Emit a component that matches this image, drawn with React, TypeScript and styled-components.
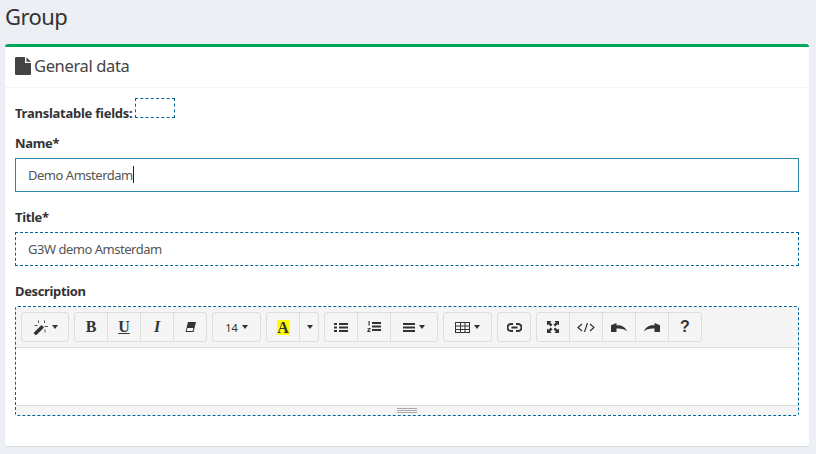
import React from 'react';
import styled, { createGlobalStyle } from 'styled-components';

const GlobalStyle = createGlobalStyle`
  html, body { margin: 0; padding: 0; background: #ecf0f5; }
  body { font-family: "Noto Sans", Lato, sans-serif; font-size: 13px; color: #333; overflow: hidden; }
`;

const Page = styled.div`
  width: 816px;
  height: 454px;
  box-sizing: border-box;
  padding: 0 7px 8px 5px;
  display: flex;
  flex-direction: column;
`;

const PageTitle = styled.h1`
  margin: 0;
  height: 44px;
  padding-top: 2px;
  box-sizing: border-box;
  font-size: 22px;
  line-height: 28px;
  font-weight: 400;
  letter-spacing: -0.6px;
  color: #333;
`;

const Box = styled.section`
  flex: 1;
  background: #fff;
  border-top: 3px solid #00a65a;
  border-radius: 3px;
  box-shadow: 0 1px 1px rgba(0, 0, 0, 0.1);
`;

const BoxHeader = styled.header`
  height: 41px;
  box-sizing: border-box;
  border-bottom: 1px solid #f4f4f4;
  padding: 0 0 3px 10px;
  display: flex;
  align-items: center;
  gap: 3px;
  font-size: 16.5px;
  letter-spacing: -0.35px;
  color: #444;
`;

const BoxBody = styled.div`
  padding: 10px;
`;

const Translatable = styled.div`
  display: flex;
  align-items: flex-start;
  height: 20px;
  font-weight: 700;
  line-height: 30px;
`;

const FieldsText = styled.span`
  width: 118px;
  letter-spacing: -0.25px;
  white-space: nowrap;
`;

const DashedTag = styled.span`
  display: block;
  width: 40px;
  height: 20px;
  box-sizing: border-box;
  border: 1px dashed #006699;
  margin-left: 2px;
`;

const Field = styled.div`
  margin-top: 15px;
`;

const Label = styled.label`
  display: block;
  height: 20px;
  line-height: 20px;
  font-weight: 700;
  letter-spacing: -0.35px;
  margin-bottom: 5px;
`;

const TextBox = styled.div<{ $focus?: boolean }>`
  height: 34px;
  box-sizing: border-box;
  border: 1px ${(p) => (p.$focus ? 'solid #2b86ad' : 'dashed #006699')};
  padding: 0 0 1px 12px;
  display: flex;
  align-items: center;
  letter-spacing: -0.48px;
  color: #555;
`;

const Caret = styled.span`
  display: inline-block;
  width: 1px;
  height: 17px;
  background: #222;
`;

const Editor = styled.div`
  height: 110px;
  box-sizing: border-box;
  border: 1px dashed #006699;
  border-radius: 3px;
  display: flex;
  flex-direction: column;
`;

const Toolbar = styled.div`
  height: 41px;
  box-sizing: border-box;
  background: #f5f5f5;
  border-bottom: 1px solid #dddddd;
  padding: 5px 0 0 5px;
  display: flex;
  gap: 5px;
`;

const BtnGroup = styled.div`
  display: flex;
  height: 30px;
`;

const Btn = styled.div<{ $w?: number }>`
  width: ${(p) => p.$w ?? 34}px;
  box-sizing: border-box;
  border: 1px solid #dddddd;
  display: flex;
  align-items: center;
  justify-content: center;
  gap: 2px;
  font-size: 11px;
  color: #333;
  & + & { margin-left: -1px; }
  &:first-child { border-radius: 3px 0 0 3px; }
  &:last-child { border-radius: 0 3px 3px 0; }
  &:only-child { border-radius: 3px; }
`;

const Arrow = styled.span`
  width: 0;
  height: 0;
  margin-left: 2px;
  border-left: 3px solid transparent;
  border-right: 3px solid transparent;
  border-top: 4px solid #333;
`;

const SerifGlyph = styled.span<{ $italic?: boolean; $under?: boolean }>`
  font-family: "Liberation Serif", serif;
  font-weight: 700;
  font-size: 16px;
  line-height: 16px;
  font-style: ${(p) => (p.$italic ? 'italic' : 'normal')};
  text-decoration: ${(p) => (p.$under ? 'underline' : 'none')};
  color: #333;
`;

const Highlight = styled.span`
  display: flex;
  align-items: center;
  justify-content: center;
  width: 13px;
  height: 15px;
  background: #ffff00;
  font-family: "Liberation Serif", serif;
  font-weight: 700;
  font-size: 16px;
  line-height: 15px;
`;

const Help = styled.span`
  font-family: "Liberation Sans", sans-serif;
  font-weight: 700;
  font-size: 16px;
  line-height: 16px;
`;

const EditArea = styled.div`
  flex: 1;
  background: #fff;
`;

const StatusBar = styled.div`
  height: 10px;
  box-sizing: border-box;
  background: #f5f5f5;
  border-top: 1px solid #dddddd;
  display: flex;
  align-items: center;
  justify-content: center;
`;

const Grip = styled.span`
  width: 20px;
  height: 5px;
  box-sizing: border-box;
  border-top: 1px solid #a9a9a9;
  border-bottom: 1px solid #a9a9a9;
  &::after {
    content: '';
    display: block;
    height: 1px;
    margin-top: 1px;
    background: #a9a9a9;
  }
`;

const Ico: React.FC<{ w: number; h: number; children: React.ReactNode }> = ({ w, h, children }) => (
  <svg width={w} height={h} viewBox={`0 0 ${w} ${h}`} fill="#333" stroke="none">
    {children}
  </svg>
);

const FileIcon = () => (
  <svg width="16" height="18" viewBox="0 0 16 18" fill="#444">
    <path d="M1 0h9v6h6v11a1 1 0 0 1-1 1H1a1 1 0 0 1-1-1V1a1 1 0 0 1 1-1z" />
    <path d="M11.5 0.3L16 4.8h-4.5z" />
  </svg>
);

const MagicIcon = () => (
  <Ico w={15} h={15}>
    <path d="M8.5 5l2.5 2.5L3 15.5 0.5 13z" />
    <path d="M5 0.5h1v2.5H5zM11 0.5h1v2.5h-1zM11.5 6h3.5v1h-3.5zM1.5 5h3v1h-3zM11.5 9.5h1v3h-1z" fill="#555" />
  </Ico>
);

const EraserIcon = () => (
  <Ico w={11} h={10}>
    <path fillRule="evenodd" d="M3 0h8L8.5 10H0.5zM2.4 6L1.7 9h6L8.4 6z" />
  </Ico>
);

const ListUlIcon = () => (
  <Ico w={14} h={9}>
    <path d="M0 0h3v2H0zM0 3.5h3v2H0zM0 7h3v2H0zM5 0h9v2H5zM5 3.5h9v2H5zM5 7h9v2H5z" />
  </Ico>
);

const ListOlIcon = () => (
  <Ico w={14} h={12}>
    <path d="M1.5 0h1.2v4.5H1.5zM0.5 7h3v1l-1.7 2h1.8v1H0.3v-1l1.9-2.2H0.5zM5 1h9v2H5zM5 4.5h9v2H5zM5 8h9v2H5z" />
  </Ico>
);

const AlignIcon = () => (
  <Ico w={12} h={9}>
    <path d="M0 0h12v2H0zM0 3.5h12v2H0zM0 7h12v2H0z" />
  </Ico>
);

const TableIcon = () => (
  <svg width="15" height="11" viewBox="0 0 15 11" fill="none" stroke="#333" strokeWidth="1">
    <rect x="0.5" y="0.5" width="14" height="10" />
    <path d="M5.5 0v11M10 0v11M0 4h15M0 7.5h15" />
  </svg>
);

const LinkIcon = () => (
  <svg width="15" height="9" viewBox="0 0 15 9" fill="none" stroke="#333" strokeWidth="2">
    <path d="M6 1H4a3.5 3.5 0 0 0 0 7h2M9 1h2a3.5 3.5 0 0 1 0 7H9M4.5 4.5h6" />
  </svg>
);

const ExpandIcon = () => (
  <Ico w={12} h={12}>
    <path d="M0 0h4.5L3.2 1.4 5.5 3.8 3.8 5.5 1.4 3.2 0 4.5zM12 0v4.5l-1.4-1.3-2.4 2.3-1.7-1.7 2.3-2.4L7.5 0zM0 12V7.5l1.4 1.3 2.4-2.3 1.7 1.7-2.3 2.4L4.5 12zM12 12H7.5l1.3-1.4-2.3-2.4 1.7-1.7 2.4 2.3L12 7.5z" />
  </Ico>
);

const CodeIcon = () => (
  <svg width="18" height="9" viewBox="0 0 18 9" fill="none" stroke="#333" strokeWidth="1.2">
    <path d="M5 1L1 4.5 5 8M13 1l4 3.5L13 8M10.5 0L7.5 9" />
  </svg>
);

const UndoIcon = () => (
  <Ico w={16} h={9}>
    <path d="M0 2.2L5.5 0v2.4C10 2 14 3.5 16 8.5 13.5 6 10 5.3 5.5 5.6V9H0z" />
  </Ico>
);

const RedoIcon = () => (
  <Ico w={16} h={9}>
    <path d="M16 2.2L10.5 0v2.4C6 2 2 3.5 0 8.5 2.5 6 6 5.3 10.5 5.6V9H16z" />
  </Ico>
);

const App: React.FC = () => {
  return (
    <Page>
      <GlobalStyle />
      <PageTitle>Group</PageTitle>
      <Box>
        <BoxHeader><FileIcon />General data</BoxHeader>
        <BoxBody>
          <Translatable><FieldsText>Translatable fields:</FieldsText><DashedTag /></Translatable>
          <Field>
            <Label>Name*</Label>
            <TextBox $focus>Demo Amsterdam<Caret /></TextBox>
          </Field>
          <Field>
            <Label>Title*</Label>
            <TextBox>G3W demo Amsterdam</TextBox>
          </Field>
          <Field>
            <Label>Description</Label>
            <Editor>
              <Toolbar>
                <BtnGroup>
                  <Btn $w={48}><MagicIcon /><Arrow /></Btn>
                </BtnGroup>
                <BtnGroup>
                  <Btn><SerifGlyph>B</SerifGlyph></Btn>
                  <Btn><SerifGlyph $under>U</SerifGlyph></Btn>
                  <Btn><SerifGlyph $italic>I</SerifGlyph></Btn>
                  <Btn><EraserIcon /></Btn>
                </BtnGroup>
                <BtnGroup>
                  <Btn $w={49}>14<Arrow /></Btn>
                </BtnGroup>
                <BtnGroup>
                  <Btn><Highlight>A</Highlight></Btn>
                  <Btn $w={20}><Arrow /></Btn>
                </BtnGroup>
                <BtnGroup>
                  <Btn><ListUlIcon /></Btn>
                  <Btn><ListOlIcon /></Btn>
                  <Btn $w={48}><AlignIcon /><Arrow /></Btn>
                </BtnGroup>
                <BtnGroup>
                  <Btn $w={49}><TableIcon /><Arrow /></Btn>
                </BtnGroup>
                <BtnGroup>
                  <Btn><LinkIcon /></Btn>
                </BtnGroup>
                <BtnGroup>
                  <Btn><ExpandIcon /></Btn>
                  <Btn><CodeIcon /></Btn>
                  <Btn><UndoIcon /></Btn>
                  <Btn><RedoIcon /></Btn>
                  <Btn><Help>?</Help></Btn>
                </BtnGroup>
              </Toolbar>
              <EditArea />
              <StatusBar><Grip /></StatusBar>
            </Editor>
          </Field>
        </BoxBody>
      </Box>
    </Page>
  );
};

export default App;
